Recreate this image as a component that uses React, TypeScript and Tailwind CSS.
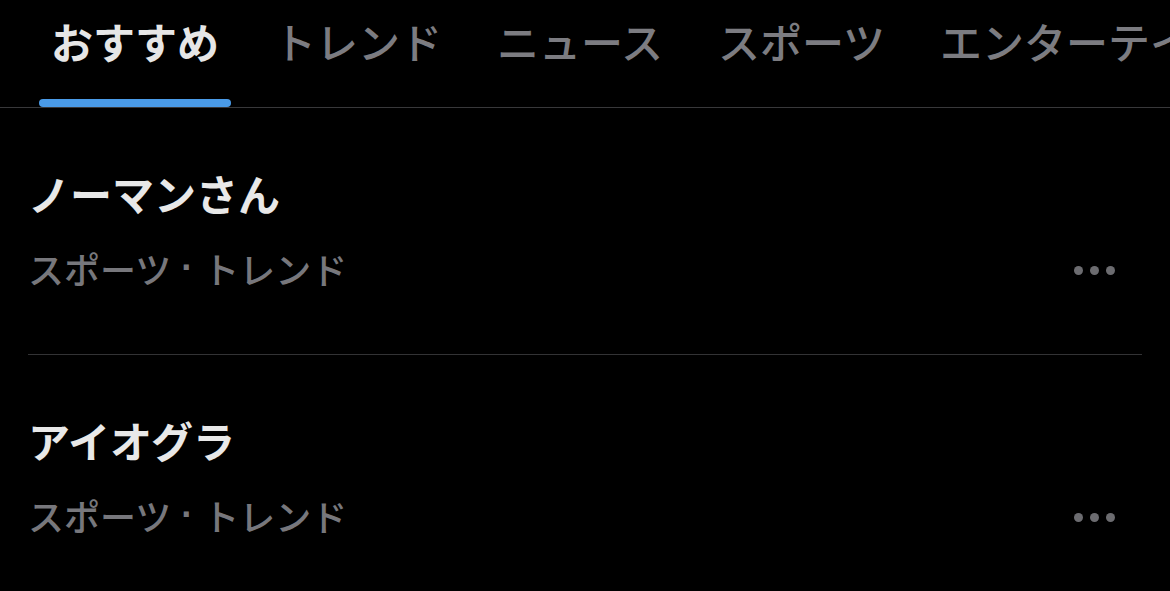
const tabs = ["おすすめ", "トレンド", "ニュース", "スポーツ", "エンターテイメント"];

const trends = [
  { title: "ノーマンさん", category: "スポーツ", kind: "トレンド" },
  { title: "アイオグラ", category: "スポーツ", kind: "トレンド" },
];

const font = { fontFamily: '"Noto Sans CJK JP", "Noto Sans", sans-serif' };

export default function App() {
  return (
    <div className="w-[1170px] h-[591px] bg-black overflow-hidden" style={font}>
      {/* Tabs */}
      <nav className="flex gap-[31px] pl-[39px] border-b border-[#38383a] whitespace-nowrap overflow-hidden">
        {tabs.map((t, i) => (
          <div key={t} className="flex flex-col items-stretch shrink-0">
            <span
              className={`px-3 pt-[17px] pb-[34px] text-[42px] leading-[48px] ${
                i === 0 ? "font-semibold text-[#e6e6e6]" : "font-medium text-[#7c7c81]"
              }`}
            >
              {t}
            </span>
            <div className={`h-2 rounded-full ${i === 0 ? "bg-[#4a9be8]" : "bg-transparent"}`} />
          </div>
        ))}
      </nav>

      {/* Trend list */}
      <div className="px-7">
        {trends.map((item, i) => (
          <div
            key={item.title}
            className={`flex items-end justify-between pt-[61px] pb-[64px] ${
              i === 0 ? "border-b border-[#333335]" : ""
            }`}
          >
            <div className="flex flex-col gap-[29px]">
              <span className="text-[42px] leading-[48px] font-semibold text-[#e8e8e8]">{item.title}</span>
              <span className="text-[36px] leading-[44px] font-medium text-[#77777c]">
                {item.category}
                <span className="font-['Liberation_Sans'] font-bold align-top"> · </span>
                {item.kind}
              </span>
            </div>
            <div className="flex gap-[7px] mr-[27px] mb-[15px]">
              <span className="w-[9px] h-[9px] rounded-full bg-[#6c6c70]" />
              <span className="w-[9px] h-[9px] rounded-full bg-[#6c6c70]" />
              <span className="w-[9px] h-[9px] rounded-full bg-[#6c6c70]" />
            </div>
          </div>
        ))}
      </div>
    </div>
  );
}
